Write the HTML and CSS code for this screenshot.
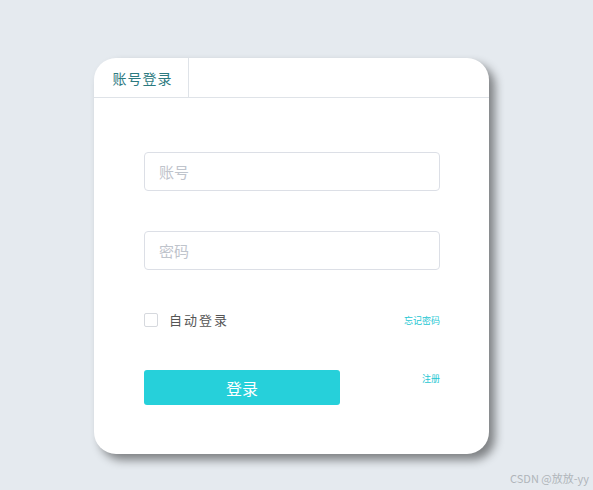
FILE: index.html
```html
<!DOCTYPE html>
<html lang="zh-CN">
<head>
  <meta charset="UTF-8" />
  <title>登录</title>
  <link rel="stylesheet" href="styles.css">
</head>
<body>
  <div class="login-box">
    <div class="tabs">
      <div class="tab active">账号登录</div>
    </div>
    <form class="login-form">
      <input type="text" class="field" placeholder="账号" />
      <input type="password" class="field field-pwd" placeholder="密码" />
      <div class="row-remember">
        <label class="remember"><span class="check"></span>自动登录</label>
        <a class="link" href="#">忘记密码</a>
      </div>
      <div class="row-submit">
        <button type="button" class="btn-login">登录</button>
        <a class="link link-reg" href="#">注册</a>
      </div>
    </form>
  </div>
  <div class="mark">CSDN @放放-yy</div>
</body>
</html>
```

FILE: styles.css
```css
body {
  margin: 0;
  padding: 58px 0 0 94px;
  height: 490px;
  box-sizing: border-box;
  background: #e5eaef;
  font-family: "Noto Sans CJK SC", "Noto Sans", sans-serif;
  position: relative;
  overflow: hidden;
}

.login-box {
  width: 395px;
  height: 396px;
  background: #fff;
  border-radius: 22px;
  box-shadow: 6px 6px 10px rgba(0, 0, 0, 0.45);
  overflow: hidden;
}

.tabs {
  height: 39px;
  border-bottom: 1px solid #dfe3e8;
  display: flex;
}

.tab {
  width: 95px;
  border-right: 1px solid #dfe3e8;
  display: flex;
  align-items: center;
  justify-content: center;
  font-size: 14px;
  letter-spacing: 1px;
  color: #2c7a80;
  padding-left: 3px;
  box-sizing: border-box;
}

.login-form {
  padding: 54px 49px 0 50px;
  display: flex;
  flex-direction: column;
}

.field {
  width: 296px;
  height: 39px;
  box-sizing: border-box;
  border: 1px solid #dcdfe6;
  border-radius: 4px;
  padding: 0 14px;
  font-size: 15px;
  font-family: inherit;
  outline: none;
}

.field::placeholder {
  color: #bfc4cc;
}

.field-pwd {
  margin-top: 40px;
}

.row-remember {
  width: 296px;
  margin-top: 43px;
  display: flex;
  justify-content: space-between;
  align-items: center;
  height: 14px;
}

.remember {
  display: flex;
  align-items: center;
  font-size: 13px;
  letter-spacing: 2px;
  color: #555;
  line-height: 14px;
}

.check {
  width: 12px;
  height: 12px;
  border: 1px solid #d6d9de;
  border-radius: 2px;
  margin-right: 11px;
}

.link {
  color: #26c7d3;
  font-size: 9px;
  text-decoration: none;
}

.row-submit {
  width: 296px;
  margin-top: 43px;
  display: flex;
  justify-content: space-between;
  align-items: flex-start;
}

.btn-login {
  width: 196px;
  height: 35px;
  border: none;
  border-radius: 3px;
  background: #26d0da;
  color: #fff;
  font-size: 16px;
  font-family: inherit;
}

.link-reg {
  margin-top: 2px;
}

.mark {
  position: absolute;
  right: 4px;
  bottom: 4px;
  font-size: 11px;
  color: #b0b5ba;
}
```
